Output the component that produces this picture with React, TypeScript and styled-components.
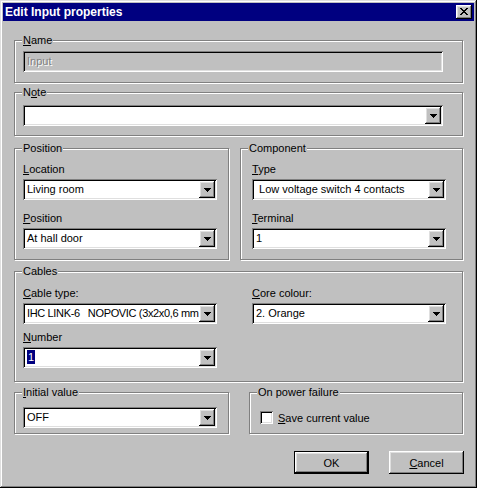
import React from 'react';
import styled, { createGlobalStyle } from 'styled-components';

const GlobalStyle = createGlobalStyle`
  html, body {
    margin: 0;
    padding: 0;
    background: #c0c0c0;
  }
  body {
    font-family: 'Liberation Sans', Arial, sans-serif;
    font-size: 11px;
    color: #000;
  }
  * {
    box-sizing: border-box;
  }
`;

const raised = `
  box-shadow: inset -1px -1px #000, inset 1px 1px #fff, inset -2px -2px #808080, inset 2px 2px #dfdfdf;
`;

const sunken = `
  box-shadow: inset 1px 1px #808080, inset -1px -1px #fff, inset 2px 2px #000, inset -2px -2px #dfdfdf;
`;

const Window = styled.div`
  width: 477px;
  height: 488px;
  padding: 3px;
  background: #c0c0c0;
  box-shadow: inset -1px -1px #000, inset 1px 1px #dfdfdf, inset -2px -2px #808080, inset 2px 2px #fff;
`;

const TitleBar = styled.div`
  height: 18px;
  background: #000080;
  display: flex;
  align-items: center;
  justify-content: space-between;
  padding: 0 2px 0 2px;
`;

const Title = styled.span`
  color: #fff;
  font-weight: bold;
  font-size: 12px;
`;

const CloseButton = styled.div`
  width: 16px;
  height: 14px;
  background: #c0c0c0;
  display: flex;
  align-items: center;
  justify-content: center;
  padding-bottom: 1px;
  ${raised}
`;

const Body = styled.div`
  padding-left: 11px;
`;

const Group = styled.div<{ $w: number; $h: number; $top: number }>`
  width: ${(p) => p.$w}px;
  height: ${(p) => p.$h}px;
  margin-top: ${(p) => p.$top}px;
  border: 1px solid #808080;
  box-shadow: inset 1px 1px #fff, 1px 1px #fff;
`;

const Caption = styled.div`
  width: fit-content;
  height: 13px;
  line-height: 13px;
  margin: -7px 0 0 7px;
  padding: 0 1px;
  background: #c0c0c0;
  white-space: nowrap;
`;

const Content = styled.div<{ $pad: number; $top: number }>`
  padding-left: ${(p) => p.$pad}px;
  margin-top: ${(p) => p.$top}px;
`;

const Row = styled.div<{ $gap: number }>`
  display: flex;
  gap: ${(p) => p.$gap}px;
`;

const CableGrid = styled.div`
  display: grid;
  grid-template-columns: 194px 194px;
  column-gap: 35px;
  row-gap: 7px;
`;

const Field = styled.div<{ $top?: number }>`
  margin-top: ${(p) => p.$top || 0}px;
`;

const Label = styled.div`
  height: 13px;
  line-height: 13px;
  margin-bottom: 3px;
  white-space: nowrap;
`;

const Box = styled.div<{ $w: number; $disabled?: boolean }>`
  width: ${(p) => p.$w}px;
  height: 21px;
  padding: 2px;
  display: flex;
  align-items: center;
  background: ${(p) => (p.$disabled ? '#c0c0c0' : '#fff')};
  color: ${(p) => (p.$disabled ? '#808080' : '#000')};
  text-shadow: ${(p) => (p.$disabled ? '1px 1px #fff' : 'none')};
  ${sunken}
`;

const BoxText = styled.span<{ $tight?: boolean }>`
  flex: 1;
  min-width: 0;
  padding-left: 2px;
  line-height: 17px;
  white-space: pre;
  overflow: hidden;
  letter-spacing: ${(p) => (p.$tight ? '-0.35px' : 'normal')};
`;

const Selected = styled.span`
  background: #000080;
  color: #fff;
  padding: 1px 1px;
`;

const DropButton = styled.div`
  width: 16px;
  height: 17px;
  flex: none;
  background: #c0c0c0;
  display: flex;
  align-items: center;
  justify-content: center;
  ${raised}
`;

const CheckRow = styled.div`
  display: flex;
  align-items: center;
  gap: 5px;
  height: 13px;
`;

const CheckBox = styled.div`
  width: 13px;
  height: 13px;
  background: #fff;
  ${sunken}
`;

const ButtonRow = styled.div`
  width: 450px;
  margin-top: 17px;
  display: flex;
  justify-content: flex-end;
  gap: 20px;
`;

const Button = styled.div<{ $default?: boolean }>`
  width: 75px;
  height: 23px;
  display: flex;
  align-items: center;
  justify-content: center;
  background: #c0c0c0;
  border: ${(p) => (p.$default ? '1px solid #000' : 'none')};
  ${raised}
`;

const Arrow = () => (
  <svg width="7" height="4" viewBox="0 0 7 4" shapeRendering="crispEdges">
    <path d="M0 0h7v1H0z M1 1h5v1H1z M2 2h3v1H2z M3 3h1v1H3z" fill="#000" />
  </svg>
);

const CloseGlyph = () => (
  <svg width="8" height="7" viewBox="0 0 8 7" shapeRendering="crispEdges">
    <path
      d="M0 0h2v1H0z M6 0h2v1H6z M1 1h2v1H1z M5 1h2v1H5z M2 2h4v1H2z M3 3h2v1H3z M2 4h4v1H2z M1 5h2v1H1z M5 5h2v1H5z M0 6h2v1H0z M6 6h2v1H6z"
      fill="#000"
    />
  </svg>
);

const Combo = ({ w, tight, children }: { w: number; tight?: boolean; children?: React.ReactNode }) => (
  <Box $w={w}>
    <BoxText $tight={tight}>{children}</BoxText>
    <DropButton>
      <Arrow />
    </DropButton>
  </Box>
);

const App = () => {
  return (
    <>
      <GlobalStyle />
      <Window>
        <TitleBar>
          <Title>Edit Input properties</Title>
          <CloseButton>
            <CloseGlyph />
          </CloseButton>
        </TitleBar>
        <Body>
          <Group $w={449} $h={43} $top={19}>
            <Caption>
              <u>N</u>ame
            </Caption>
            <Content $pad={8} $top={4}>
              <Box $w={420} $disabled>
                <BoxText>Input</BoxText>
              </Box>
            </Content>
          </Group>

          <Group $w={449} $h={44} $top={9}>
            <Caption>
              N<u>o</u>te
            </Caption>
            <Content $pad={8} $top={6}>
              <Combo w={420} />
            </Content>
          </Group>

          <Row $gap={11}>
            <Group $w={215} $h={112} $top={12}>
              <Caption>Position</Caption>
              <Content $pad={8} $top={8}>
                <Field>
                  <Label>
                    <u>L</u>ocation
                  </Label>
                  <Combo w={194}>Living room</Combo>
                </Field>
                <Field $top={12}>
                  <Label>
                    <u>P</u>osition
                  </Label>
                  <Combo w={194}>At hall door</Combo>
                </Field>
              </Content>
            </Group>
            <Group $w={223} $h={112} $top={12}>
              <Caption>Component</Caption>
              <Content $pad={11} $top={8}>
                <Field>
                  <Label>
                    <u>T</u>ype
                  </Label>
                  <Combo w={194}> Low voltage switch 4 contacts</Combo>
                </Field>
                <Field $top={12}>
                  <Label>
                    <u>T</u>erminal
                  </Label>
                  <Combo w={194}>1</Combo>
                </Field>
              </Content>
            </Group>
          </Row>

          <Group $w={449} $h={111} $top={11}>
            <Caption>Cables</Caption>
            <Content $pad={8} $top={9}>
              <CableGrid>
                <Field>
                  <Label>
                    <u>C</u>able type:
                  </Label>
                  <Combo w={194} tight>
                    IHC LINK-6   NOPOVIC (3x2x0,6 mm
                  </Combo>
                </Field>
                <Field>
                  <Label>
                    <u>C</u>ore colour:
                  </Label>
                  <Combo w={194}>2. Orange</Combo>
                </Field>
                <Field>
                  <Label>
                    <u>N</u>umber
                  </Label>
                  <Combo w={194}>
                    <Selected>1</Selected>
                  </Combo>
                </Field>
              </CableGrid>
            </Content>
          </Group>

          <Row $gap={20}>
            <Group $w={215} $h={42} $top={10}>
              <Caption>
                <u>I</u>nitial value
              </Caption>
              <Content $pad={8} $top={8}>
                <Combo w={194}>OFF</Combo>
              </Content>
            </Group>
            <Group $w={214} $h={42} $top={10}>
              <Caption>On power failure</Caption>
              <Content $pad={10} $top={12}>
                <CheckRow>
                  <CheckBox />
                  <span>
                    <u>S</u>ave current value
                  </span>
                </CheckRow>
              </Content>
            </Group>
          </Row>

          <ButtonRow>
            <Button $default>OK</Button>
            <Button>
              <span>
                <u>C</u>ancel
              </span>
            </Button>
          </ButtonRow>
        </Body>
      </Window>
    </>
  );
};

export default App;
